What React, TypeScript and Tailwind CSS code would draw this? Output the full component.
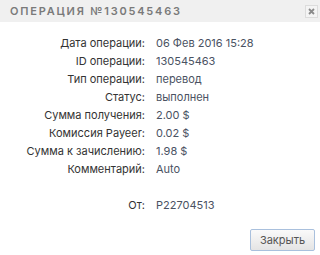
const rows: [string, string][] = [
  ["Дата операции:", "06 Фев 2016 15:28"],
  ["ID операции:", "130545463"],
  ["Тип операции:", "перевод"],
  ["Статус:", "выполнен"],
  ["Сумма получения:", "2.00 $"],
  ["Комиссия Payeer:", "0.02 $"],
  ["Сумма к зачислению:", "1.98 $"],
  ["Комментарий:", "Auto"],
  ["", ""],
  ["От:", "P22704513"],
];

export default function App() {
  return (
    <div className="w-[320px] h-[255px] bg-white font-['Inter',sans-serif] overflow-hidden">
      <div className="h-[22px] bg-[#f0f0f0] flex items-center justify-between pl-[10px] pr-[2px]">
        <span className="text-[11px] font-semibold tracking-[1.8px] text-[#7a7a7a] uppercase">
          Операция №130545463
        </span>
        <button className="w-[13px] h-[13px] border border-[#dcdcdc] bg-[#f4f4f4] flex items-center justify-center">
          <svg width="7" height="7" viewBox="0 0 7 7">
            <path d="M1 1L6 6M6 1L1 6" stroke="#8a8a8a" strokeWidth="1.8" />
          </svg>
        </button>
      </div>
      <div className="pt-[12px] grid grid-cols-[145px_1fr] gap-x-[11px] text-[11px] leading-[18px]">
        {rows.map(([label, value], i) => (
          <div key={i} className="contents">
            <div className="text-right text-[#333] h-[18px] whitespace-nowrap">{label}</div>
            <div className="text-[#4a5262] h-[18px]">{value}</div>
          </div>
        ))}
      </div>
      <div className="flex justify-end pr-[5px] pt-[15px]">
        <button className="w-[65px] h-[22px] border border-[#a9c0dd] rounded-[2px] bg-gradient-to-b from-[#fafafa] to-[#e4e4e4] text-[11px] text-[#555]">
          Закрыть
        </button>
      </div>
    </div>
  );
}
